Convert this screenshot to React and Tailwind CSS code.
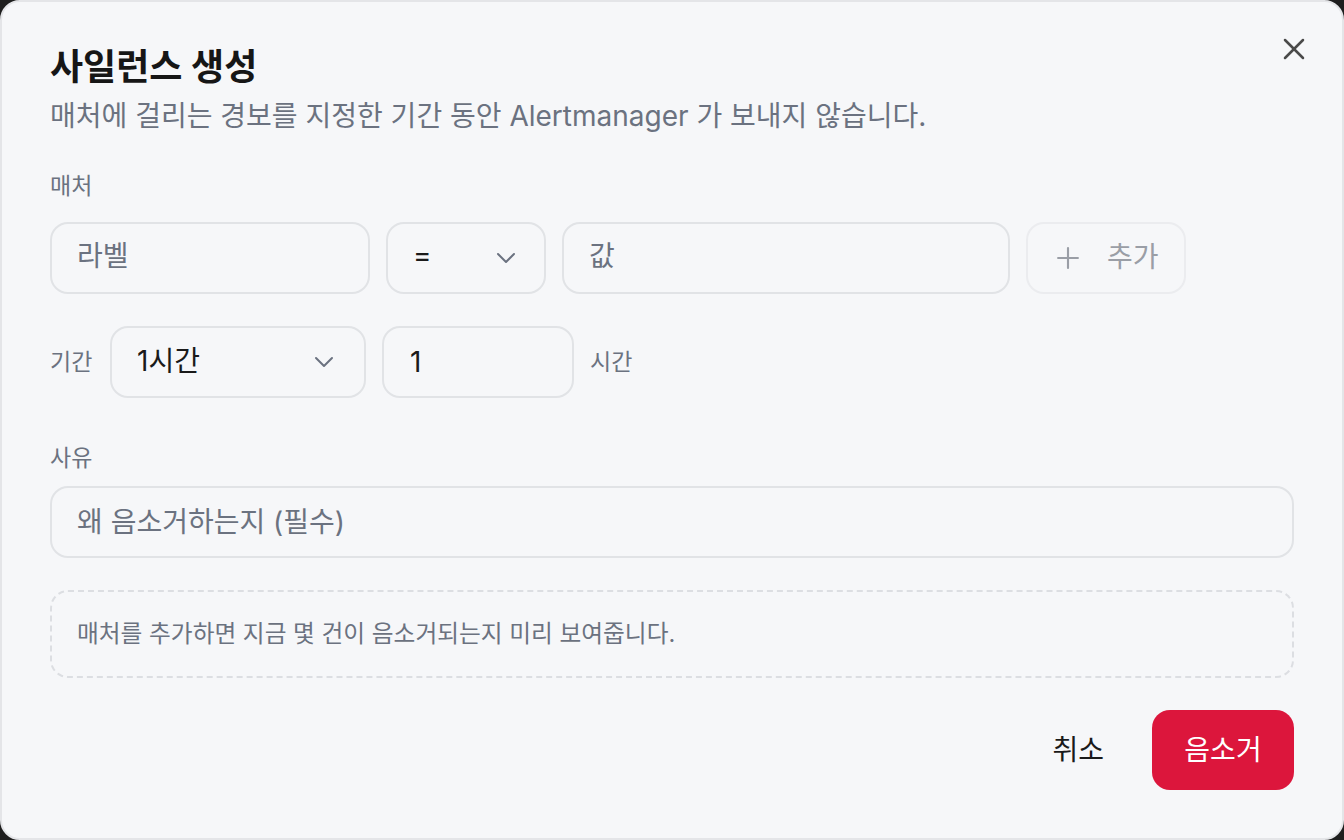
import React from "react";
import { X, ChevronDown, Plus } from "lucide-react";

const font = { fontFamily: 'Inter, "Noto Sans CJK KR", "Noto Sans", sans-serif' };

export default function App() {
  return (
    <div className="w-[1344px] h-[840px] bg-[#1e1e1e]" style={font}>
      <div className="relative w-full h-full rounded-[20px] border-2 border-[#e4e5e8] bg-[#f6f7f9] px-[48px] pt-[45px] flex flex-col">
        <button className="absolute right-[30px] top-[29px] text-[#4a4a4a]">
          <X size={36} strokeWidth={1.7} />
        </button>

        <h1 className="text-[36px] leading-[40px] font-bold text-[#161616]">사일런스 생성</h1>
        <p className="mt-[11px] text-[28px] leading-[36px] text-[#6b7280]">
          매처에 걸리는 경보를 지정한 기간 동안 Alertmanager 가 보내지 않습니다.
        </p>

        <div className="mt-[38px] text-[23px] leading-[28px] text-[#6b7280]">매처</div>

        <div className="mt-[22px] flex gap-4">
          <div className="w-[320px] h-[72px] rounded-[18px] border-2 border-[#e1e3e6] flex items-center px-[25px] pb-[5px] text-[28px] text-[#6b7280]">
            라벨
          </div>
          <div className="w-[160px] h-[72px] rounded-[18px] border-2 border-[#e1e3e6] flex items-center justify-between pl-[25px] pr-[22px] text-[28px] text-[#1a1a1a]">
            <span className="pb-[6px]">=</span>
            <ChevronDown size={32} strokeWidth={1.5} className="text-[#6b7280]" />
          </div>
          <div className="w-[448px] h-[72px] rounded-[18px] border-2 border-[#e1e3e6] flex items-center px-[25px] pb-[5px] text-[28px] text-[#6b7280]">
            값
          </div>
          <div className="w-[160px] h-[72px] rounded-[18px] border-2 border-[#ebecef] flex items-center pl-[23px] gap-[22px] text-[28px] text-[#9a9ea6]">
            <Plus size={34} strokeWidth={1.5} />
            <span className="pb-[2px]">추가</span>
          </div>
        </div>

        <div className="mt-[32px] flex items-center">
          <span className="text-[23px] leading-[28px] text-[#6b7280] w-[60px]">기간</span>
          <div className="w-[256px] h-[72px] rounded-[18px] border-2 border-[#e1e3e6] flex items-center justify-between pl-[25px] pr-[24px] text-[28px] text-[#1a1a1a]">
            <span className="pb-[2px]">1시간</span>
            <ChevronDown size={32} strokeWidth={1.5} className="text-[#6b7280]" />
          </div>
          <div className="ml-4 w-[192px] h-[72px] rounded-[18px] border-2 border-[#e1e3e6] flex items-center px-[26px] text-[28px] text-[#1a1a1a]">
            1
          </div>
          <span className="ml-4 text-[23px] leading-[28px] text-[#6b7280]">시간</span>
        </div>

        <div className="mt-[46px] text-[23px] leading-[28px] text-[#6b7280]">사유</div>
        <div className="mt-[14px] h-[72px] rounded-[18px] border-2 border-[#e1e3e6] flex items-center px-[25px] text-[28px] text-[#6b7280]">
          왜 음소거하는지 (필수)
        </div>

        <div className="mt-[32px] h-[88px] rounded-[18px] border-2 border-dashed border-[#dcdee2] flex items-center px-[25px] text-[23.7px] text-[#6b7280]">
          매처를 추가하면 지금 몇 건이 음소거되는지 미리 보여줍니다.
        </div>

        <div className="mt-[32px] flex justify-end items-center gap-[24px]">
          <button className="h-[80px] px-[24px] text-[28px] text-[#1a1a1a]">취소</button>
          <button className="h-[80px] w-[142px] rounded-[18px] bg-[#dc163c] text-[28px] text-white">음소거</button>
        </div>
      </div>
    </div>
  );
}
